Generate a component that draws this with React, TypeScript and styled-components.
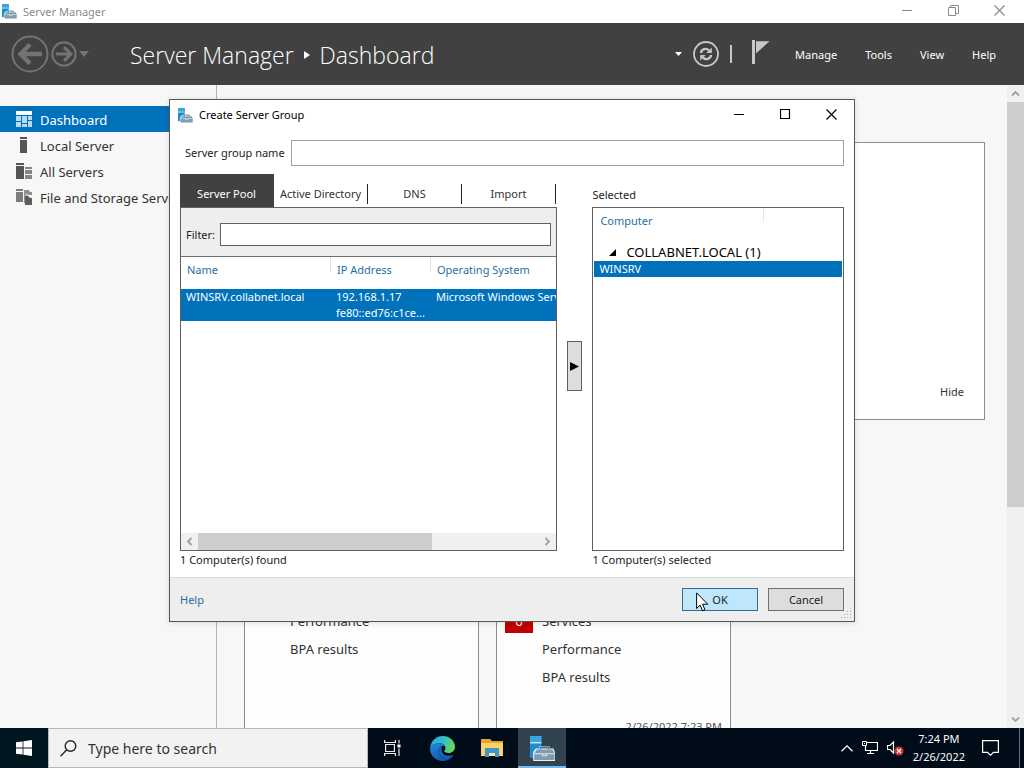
import React from 'react';
import styled, { createGlobalStyle } from 'styled-components';

const blue = '#0072bc';
const linkBlue = '#1f6fa5';
const charcoal = '#414141';

const GlobalStyle = createGlobalStyle`
  *, *::before, *::after { box-sizing: border-box; }
  body {
    margin: 0;
    font-family: 'Noto Sans', 'Open Sans', sans-serif;
    font-size: 11px;
    line-height: 16px;
    color: #222;
  }
  button, input { font: inherit; color: inherit; margin: 0; padding: 0; border: 0; border-radius: 0; }
  button { background: none; }
  svg { display: block; flex: none; }
`;

const Desktop = styled.div`
  position: relative;
  display: flex;
  flex-direction: column;
  height: 100vh;
  overflow: hidden;
  background: #f7f7f7;
`;

/* ---------- main window ---------- */

const TitleBar = styled.div`
  display: flex;
  align-items: center;
  height: 23px;
  flex: none;
  padding: 0 2px;
  background: #fff;
  color: #8a8a8a;
`;

const TitleText = styled.span`
  flex: 1;
  padding-left: 6px;
`;

const CaptionButton = styled.button`
  display: flex;
  align-items: center;
  justify-content: center;
  width: 46px;
  height: 22px;
  padding-bottom: 2px;
  color: ${(p: { $dim?: boolean }) => (p.$dim ? '#8a8a8a' : '#000')};
`;

const Header = styled.header`
  display: flex;
  align-items: center;
  height: 62px;
  flex: none;
  padding: 0 14px 0 11px;
  background: ${charcoal};
  color: #fff;
`;

const NavButton = styled.button`
  display: flex;
  align-items: center;
  justify-content: center;
  margin-right: 2px;
`;

const Crumbs = styled.h1`
  display: flex;
  align-items: center;
  gap: 10px;
  flex: 1;
  margin: 0 0 0 39px;
  padding-top: 2px;
  font-family: 'Open Sans', sans-serif;
  font-size: 23px;
  line-height: 32px;
  font-weight: 300;
  color: #fff;
`;

const HeaderTools = styled.div`
  display: flex;
  align-items: center;
  gap: 11px;
`;

const Divider = styled.span`
  width: 2px;
  height: 18px;
  background: #c8c8c8;
`;

const FlagButton = styled.button`
  padding: 0 0 4px 9px;
`;

const MenuBar = styled.nav`
  display: flex;
  margin-left: 11px;
`;

const MenuButton = styled.button`
  padding: 6px 14px 4px;
  color: #fff;
`;

const Workspace = styled.div`
  display: flex;
  flex: 1;
  min-height: 0;
`;

const Sidebar = styled.nav`
  display: flex;
  flex-direction: column;
  width: 217px;
  flex: none;
  padding-top: 21px;
  border-right: 1px solid #b4b4b4;
`;

const SideLink = styled.a<{ $active?: boolean }>`
  display: flex;
  align-items: center;
  gap: 8px;
  height: 26px;
  padding: 0 6px 0 16px;
  font-size: 13px;
  line-height: 18px;
  white-space: nowrap;
  overflow: hidden;
  text-decoration: none;
  color: ${(p) => (p.$active ? '#fff' : '#333')};
  background: ${(p) => (p.$active ? blue : 'transparent')};
  span { padding-top: 2px; }
`;

const Content = styled.main`
  display: flex;
  flex-direction: column;
  gap: 60px;
  flex: 1;
  min-width: 0;
  padding: 57px 22px 0 27px;
  overflow: hidden;
`;

const Welcome = styled.section`
  display: flex;
  justify-content: flex-end;
  align-items: flex-end;
  flex: none;
  height: 278px;
  padding: 19px 20px;
  border: 1px solid #8c8c8c;
  background: #fff;
`;

const HideButton = styled.button`
  color: #333;
`;

const Cards = styled.div`
  display: flex;
  gap: 17px;
  flex: none;
`;

const Card = styled.section`
  display: flex;
  flex-direction: column;
  width: 235px;
  height: 270px;
  padding: 126px 8px 0;
  border: 1px solid #8c8c8c;
  background: #fdfdfd;
`;

const CardRow = styled.div`
  display: flex;
  align-items: center;
  gap: 9px;
  height: 28px;
  font-size: 13px;
  line-height: 18px;
  color: #333;
`;

const BadgeSlot = styled.span`
  width: 28px;
  flex: none;
`;

const Badge = styled(BadgeSlot)`
  height: 24px;
  line-height: 24px;
  text-align: center;
  color: #fff;
  background: #c00000;
`;

const Stamp = styled.time`
  align-self: flex-end;
  margin-top: 28px;
  color: #555;
`;

const VScroll = styled.div`
  display: flex;
  flex-direction: column;
  align-items: center;
  width: 17px;
  flex: none;
  background: #f0f0f0;
`;

const ScrollArrow = styled.button`
  display: flex;
  align-items: center;
  justify-content: center;
  width: 17px;
  height: 17px;
  color: #a0a0a0;
`;

const VThumb = styled.div`
  width: 100%;
  height: 405px;
  margin-bottom: auto;
  background: #cdcdcd;
`;

/* ---------- dialog ---------- */

const Dialog = styled.div`
  position: absolute;
  top: 99px;
  left: 169px;
  right: 169px;
  display: flex;
  flex-direction: column;
  border: 1px solid #555;
  background: #fff;
  box-shadow: 0 1px 6px rgba(0, 0, 0, 0.12);
`;

const DialogTitle = styled.div`
  display: flex;
  align-items: center;
  height: 30px;
  padding-left: 8px;
  color: #000;
`;

const NameRow = styled.label`
  display: flex;
  align-items: center;
  gap: 6px;
  padding: 10px 10px 8px 15px;
`;

const NameInput = styled.input`
  flex: 1;
  min-width: 0;
  height: 26px;
  padding: 0 4px;
  border: 1px solid #a0a0a0;
  background: #fff;
`;

const Columns = styled.div`
  display: grid;
  grid-template-columns: 3fr 35px 2fr;
  grid-template-rows: 33px 344px 18px;
  padding: 0 10px 8px;
`;

const Tabs = styled.div`
  display: grid;
  grid-template-columns: repeat(4, 94px);
`;

const Tab = styled.button<{ $active?: boolean }>`
  display: flex;
  align-items: center;
  justify-content: space-between;
  padding-top: 6px;
  white-space: nowrap;
  color: ${(p) => (p.$active ? '#fff' : '#333')};
  background: ${(p) => (p.$active ? charcoal : 'transparent')};
  span { flex: 1; }
  &::after {
    content: '';
    width: 1px;
    height: 20px;
    background: ${(p) => (p.$active ? 'transparent' : '#222')};
  }
`;

const SelectedLabel = styled.div`
  padding-top: 13px;
`;

const Pane = styled.div`
  display: flex;
  flex-direction: column;
  min-width: 0;
  border: 1px solid #606060;
  background: #fff;
  overflow: hidden;
`;

const FilterRow = styled.label`
  display: flex;
  align-items: center;
  gap: 5px;
  height: 49px;
  flex: none;
  padding: 5px 5px 0;
  border-bottom: 1px solid #707070;
  background: #eee;
`;

const FilterInput = styled.input`
  flex: 1;
  min-width: 0;
  height: 23px;
  padding: 0 4px;
  border: 1px solid #606060;
  background: #fff;
`;

const TableArea = styled.div`
  flex: 1;
  min-height: 0;
  overflow: hidden;
`;

const Table = styled.table`
  border-collapse: collapse;
  table-layout: fixed;
  width: 602px;
  th {
    height: 32px;
    padding: 0 6px 6px;
    font-weight: 400;
    text-align: left;
    color: ${linkBlue};
    background: linear-gradient(#e0e0e0, #e0e0e0) right top / 1px 15px no-repeat;
  }
  td {
    padding: 0 5px;
    vertical-align: top;
    white-space: nowrap;
    overflow: hidden;
    text-overflow: ellipsis;
    color: #fff;
    background: ${blue};
  }
`;

const Col = styled.col<{ $w: number }>`
  width: ${(p) => p.$w}px;
`;

const HScroll = styled.div`
  display: flex;
  height: 17px;
  flex: none;
  background: #f0f0f0;
`;

const HThumb = styled.div`
  width: 234px;
  margin-right: auto;
  background: #cdcdcd;
`;

const Middle = styled.div`
  display: flex;
  align-items: center;
  justify-content: center;
  padding-bottom: 26px;
`;

const AddButton = styled.button`
  display: flex;
  align-items: center;
  justify-content: center;
  width: 15px;
  height: 50px;
  border: 1px solid #606060;
  background: #ddd;
`;

const SelectedHead = styled.div`
  display: grid;
  grid-template-columns: 171px 1fr;
  height: 35px;
  color: ${linkBlue};
  span {
    height: 14px;
    padding: 5px 7px;
    border-right: 1px solid #e6e6e6;
  }
`;

const Group = styled.div`
  display: flex;
  align-items: center;
  gap: 10px;
  height: 18px;
  padding-left: 16px;
  font-size: 13px;
  line-height: 18px;
  color: #000;
`;

const SelectedItem = styled.div`
  margin: 0 1px;
  padding: 0 5px;
  color: #fff;
  background: ${blue};
`;

const Status = styled.div`
  grid-column: ${(p: { $col: number }) => p.$col};
  padding-top: 1px;
`;

const Footer = styled.footer`
  display: flex;
  align-items: center;
  gap: 10px;
  height: 44px;
  padding: 0 10px;
  border-top: 1px solid #dcdcdc;
  background: #eee;
  a { margin-right: auto; color: ${linkBlue}; text-decoration: none; }
`;

const PushButton = styled.button<{ $hot?: boolean }>`
  width: 76px;
  height: 23px;
  border: 1px solid ${(p) => (p.$hot ? '#3c6c8c' : '#707070')};
  background: ${(p) => (p.$hot ? '#bee6fd' : '#ddd')};
  color: #222;
`;

const Grip = styled.div`
  position: absolute;
  right: 1px;
  bottom: 1px;
`;

const Cursor = styled.div`
  position: absolute;
  right: 145px;
  bottom: 9px;
  pointer-events: none;
`;

/* ---------- taskbar ---------- */

const Taskbar = styled.footer`
  display: flex;
  height: 40px;
  flex: none;
  background: #000c18;
  color: #fff;
`;

const StartButton = styled.button`
  display: flex;
  align-items: center;
  justify-content: center;
  width: 48px;
  background: #011720;
`;

const Search = styled.label`
  display: flex;
  align-items: center;
  gap: 11px;
  width: 320px;
  padding-left: 11px;
  border: 1px solid #b8b8b8;
  background: #f2f2f2;
  color: #333;
`;

const SearchInput = styled.input`
  flex: 1;
  min-width: 0;
  padding-top: 2px;
  background: none;
  font-size: 14px;
  line-height: 20px;
  &::placeholder { color: #333; opacity: 1; }
`;

const TaskButtons = styled.div`
  display: flex;
  gap: 2px;
  flex: 1;
`;

const TaskButton = styled.button<{ $active?: boolean }>`
  display: flex;
  align-items: center;
  justify-content: center;
  width: 48px;
  background: ${(p) => (p.$active ? '#33424f' : 'transparent')};
  box-shadow: ${(p) => (p.$active ? 'inset 0 -2px #76b9ed' : 'none')};
`;

const Tray = styled.div`
  display: flex;
  align-items: center;
  gap: 9px;
`;

const Clock = styled.time`
  display: flex;
  flex-direction: column;
  align-items: center;
  padding: 0 8px 0 0;
  line-height: 18px;
  color: #fff;
`;

const ShowDesktop = styled.button`
  align-self: stretch;
  width: 5px;
  margin-left: 11px;
  border-left: 1px solid #6a727a;
`;

/* ---------- drawings ---------- */

const ServerIcon = ({ size }: { size: number }) => (
  <svg width={size} height={size} viewBox="0 0 24 24" aria-hidden="true">
    <path d="M0 0h11v21H0z" fill="#1c8fd0" />
    <path d="M0 0h11v6H0z" fill="#3fa4da" />
    <path d="M0 6.500h11" stroke="#e6f4fb" strokeWidth="1.200" />
    <path d="M3 15.500L5.500 12H9v-2h10v2h3.500l1.500 3.500V24H3z" fill="#fff" opacity=".9" />
    <path d="M10 13v-1.800h8V13" fill="none" stroke="#54748a" strokeWidth="1.400" />
    <path d="M4 16.500L6.500 13h15l2 3.500V23H4z" fill="#7d9cb0" />
    <path d="M4 17h19.500M12 16.500v2.500h4v-2.500" fill="none" stroke="#dde9f0" />
  </svg>
);

const MinimizeIcon = () => (
  <svg width="11" height="11" viewBox="0 0 11 11"><path d="M0 5.500h10" stroke="currentColor" /></svg>
);
const RestoreIcon = () => (
  <svg width="11" height="11" viewBox="0 0 11 11" fill="none" stroke="currentColor">
    <path d="M.5 2.500h7v8h-7zM2.500 2.500v-2h8v8h-3" />
  </svg>
);
const MaximizeIcon = () => (
  <svg width="11" height="11" viewBox="0 0 11 11"><path d="M.5.5h9v9h-9z" fill="none" stroke="currentColor" strokeWidth="1.200" /></svg>
);
const CloseIcon = () => (
  <svg width="11" height="11" viewBox="0 0 11 11"><path d="M.5.5l10 10M10.500.5l-10 10" stroke="currentColor" strokeWidth="1.200" /></svg>
);

const NavArrow = ({ size, back }: { size: number; back?: boolean }) => (
  <svg width={size} height={size} viewBox="0 0 38 38" fill="none" stroke="#737373">
    <circle cx="19" cy="19" r={back ? 17.500 : 17} strokeWidth={back ? 2 : 3} />
    {back ? (
      <path d="M31 19H9M19 9.500L9.500 19l9.500 9.500" strokeWidth="4.500" />
    ) : (
      <path d="M7 19h22M19 9l10 10-10 10" strokeWidth="4.500" />
    )}
  </svg>
);

const DownTriangle = ({ w, h, color }: { w: number; h: number; color: string }) => (
  <svg width={w} height={h} viewBox="0 0 10 6" preserveAspectRatio="none"><path d="M0 0h10L5 6z" fill={color} /></svg>
);

const RefreshIcon = () => (
  <svg width="26" height="26" viewBox="0 0 26 26" fill="none" stroke="#c8c8c8">
    <circle cx="13" cy="13" r="12" strokeWidth="1.800" />
    <path d="M8 12c.3-3.800 5-5.500 8-2.600M18 14c-.3 3.800-5 5.500-8 2.600" strokeWidth="2.400" />
    <path d="M18.800 6.500v5.500h-5.500zM7.200 19.500V14h5.500z" fill="#c8c8c8" stroke="none" />
  </svg>
);

const FlagIcon = () => (
  <svg width="18" height="24" viewBox="0 0 18 24">
    <path d="M0 0h3v24H0z" fill="#c8c8c8" />
    <path d="M4 1.200h13.500L4 13.500z" fill="#c8c8c8" />
  </svg>
);

const DashboardIcon = () => (
  <svg width="16" height="16" viewBox="0 0 16 16">
    <path d="M0 0h16v4H0z" fill="#fff" />
    <path d="M0 5h5v5H0zM0 11h5v5H0zM6 5h5v7H6zM12 5h4v4h-4zM6 13h5v3H6zM12 10h4v6h-4z" fill="#b9d9ee" />
  </svg>
);
const LocalIcon = () => (
  <svg width="16" height="16" viewBox="0 0 16 16"><path d="M4 0h7v2H4zM4 3h7v13H4z" fill="#555" /></svg>
);
const AllIcon = () => (
  <svg width="16" height="16" viewBox="0 0 16 16">
    <path d="M0 0h8v2H0zM0 3h8v13H0z" fill="#555" />
    <path d="M9 4h7v2H9zM9 7h7v4H9zM9 12h7v4H9z" fill="#858585" />
  </svg>
);
const StorageIcon = () => (
  <svg width="16" height="16" viewBox="0 0 16 16">
    <path d="M0 0h7v2H0zM0 3h7v10H0z" fill="#7c7c7c" />
    <path d="M8 1h5l1 2h2v3H8zM8 5h4v9H8z" fill="#909090" />
    <path d="M9 7h3l2 2h2v7H9z" fill="#5c5c5c" />
    <path d="M9 6h3.500l2 2.500" stroke="#eee" fill="none" />
  </svg>
);

const Chevron = ({ d }: { d: string }) => (
  <svg width="9" height="9" viewBox="0 0 9 9" fill="none"><path d={d} stroke="currentColor" strokeWidth="1.800" /></svg>
);

const GripDots = () => (
  <svg width="12" height="12" viewBox="0 0 12 12" fill="#aaa">
    <path d="M9 0h1v1H9zM6 3h1v1H6zM9 3h1v1H9zM3 6h1v1H3zM6 6h1v1H6zM9 6h1v1H9zM0 9h1v1H0zM3 9h1v1H3zM6 9h1v1H6zM9 9h1v1H9z" />
  </svg>
);

const CursorArrow = () => (
  <svg width="13" height="20" viewBox="0 0 13 20">
    <path d="M.6.9v15.600l3.500-3.400 2.500 5.700 2.400-1-2.500-5.600h5.200z" fill="#fff" stroke="#000" />
  </svg>
);

const WindowsLogo = () => (
  <svg width="16" height="16" viewBox="0 0 16 16" fill="#fff">
    <path d="M0 2.300L6.600 1.400v6.200H0zM7.400 1.300L16 0v7.600H7.400zM0 8.400h6.600v6.200L0 13.700zM7.400 8.400H16V16l-8.600-1.300z" />
  </svg>
);

const SearchIcon = () => (
  <svg width="17" height="17" viewBox="0 0 17 17" fill="none" stroke="#222" strokeWidth="1.400">
    <circle cx="10.500" cy="6" r="5.300" />
    <path d="M6.800 9.800L.5 16.200" />
  </svg>
);

const TaskViewIcon = () => (
  <svg width="17" height="16" viewBox="0 0 17 16" fill="none" stroke="#e8e8e8" strokeWidth="1.200">
    <path d="M1.600 4.500h8.800v7H1.600zM.6 0v2.500h10.800V0M.6 16v-2.500h10.800V16M15 0v3.500M15 8.500V16" />
    <path d="M13.500 4.500h3v3h-3z" fill="#fff" stroke="none" />
  </svg>
);

const EdgeIcon = () => (
  <svg width="25" height="25" viewBox="0 0 24 24">
    <defs>
      <linearGradient id="edgeTop" x1="0" y1="0.300" x2="1" y2="0.600">
        <stop offset="0" stopColor="#2aa7e0" />
        <stop offset=".5" stopColor="#2fc3c4" />
        <stop offset="1" stopColor="#6fd854" />
      </linearGradient>
      <linearGradient id="edgeLow" x1="0" y1="0" x2="0.600" y2="1">
        <stop offset="0" stopColor="#1f8fe0" />
        <stop offset="1" stopColor="#0f56a8" />
      </linearGradient>
    </defs>
    <path d="M.2 11C1 4.500 6 0 12.200 0 19 0 24 4.800 24 10.300c0 3.700-2.900 6-6.100 6-2.700 0-4.200-.9-4.200-1.800 0-.7 1.100-1.100 1.100-3C14.800 9 12.300 7 8.900 7 5.300 7 1.700 8.600.2 11z" fill="url(#edgeTop)" />
    <path d="M.2 11C1.700 8.600 5.300 7 8.900 7c3.400 0 5.500 1.700 5.900 3.600-.8-.9-2.300-1.200-3.500-.7-4.800 2-4 9.600 2.800 11 3.200.6 5.800-.2 7.800-1.500C19.700 22.300 16 24 12.200 24 5 24-.7 18 .2 11z" fill="url(#edgeLow)" />
    <path d="M11.300 9.900c-4.800 2-4 9.600 2.800 11 3.200.6 5.800-.2 7.800-1.500.6-.5.200-1.200-.6-.9-4.600 1.600-9.300-.3-10-4.200-.3-1.900.2-3.500 0-4.400z" fill="#1667bd" />
  </svg>
);

const ExplorerIcon = () => (
  <svg width="22" height="18" viewBox="0 0 22 18">
    <path d="M0 0h9l2 2h11v3H0z" fill="#e3a52c" />
    <path d="M0 4h22v13H0z" fill="#fbd468" />
    <path d="M4 9h14v9h-4v-4H8v4H4z" fill="#4095c9" />
    <path d="M8 14h6v3H8z" fill="#fbe3a0" />
  </svg>
);

const ChevronUpIcon = () => (
  <svg width="12" height="7" viewBox="0 0 12 7" fill="none" stroke="#fff" strokeWidth="1.300"><path d="M.5 6.300L6 .9l5.500 5.400" /></svg>
);
const NetworkIcon = () => (
  <svg width="16" height="14" viewBox="0 0 16 14" fill="none" stroke="#fff">
    <path d="M5 1.500h10.500v8H3.500V5M8.500 9.500v3M5 12.500h7" strokeWidth="1.200" />
    <path d="M.5.500h4v4h-4z" fill="#000c18" />
    <path d="M2 2h1v1H2z" fill="#fff" stroke="none" />
  </svg>
);
const VolumeIcon = () => (
  <svg width="17" height="15" viewBox="0 0 17 15">
    <path d="M.5 4.500h2.500L6.500 1v11L3 8.500H.5z" fill="none" stroke="#fff" strokeWidth="1.200" />
    <circle cx="12" cy="10" r="4.500" fill="#d03438" />
    <path d="M10 8l4 4M14 8l-4 4" stroke="#fff" strokeWidth="1.200" />
  </svg>
);
const NoticeIcon = () => (
  <svg width="17" height="16" viewBox="0 0 17 16" fill="none" stroke="#fff" strokeWidth="1.200">
    <path d="M.6.6h15.800v11.800H11.500L8.500 15.200l-3-2.800H.6z" />
  </svg>
);

/* ---------- page ---------- */

const sideItems = [
  { label: 'Dashboard', icon: <DashboardIcon />, active: true },
  { label: 'Local Server', icon: <LocalIcon /> },
  { label: 'All Servers', icon: <AllIcon /> },
  { label: 'File and Storage Services', icon: <StorageIcon /> },
];

const CreateGroupDialog = () => (
  <Dialog role="dialog" aria-label="Create Server Group">
    <DialogTitle>
      <ServerIcon size={15} />
      <TitleText>Create Server Group</TitleText>
      <CaptionButton aria-label="Minimize"><MinimizeIcon /></CaptionButton>
      <CaptionButton aria-label="Maximize"><MaximizeIcon /></CaptionButton>
      <CaptionButton aria-label="Close"><CloseIcon /></CaptionButton>
    </DialogTitle>
    <NameRow>
      Server group name
      <NameInput type="text" />
    </NameRow>
    <Columns>
      <Tabs>
        <Tab $active><span>Server Pool</span></Tab>
        <Tab><span>Active Directory</span></Tab>
        <Tab><span>DNS</span></Tab>
        <Tab><span>Import</span></Tab>
      </Tabs>
      <span />
      <SelectedLabel>Selected</SelectedLabel>

      <Pane>
        <FilterRow>
          Filter:
          <FilterInput type="text" />
        </FilterRow>
        <TableArea>
          <Table>
            <colgroup>
              <Col $w={150} />
              <Col $w={100} />
              <Col $w={352} />
            </colgroup>
            <thead>
              <tr><th>Name</th><th>IP Address</th><th>Operating System</th></tr>
            </thead>
            <tbody>
              <tr>
                <td>WINSRV.collabnet.local</td>
                <td>192.168.1.17<br />fe80::ed76:c1ce...</td>
                <td>Microsoft Windows Server</td>
              </tr>
            </tbody>
          </Table>
        </TableArea>
        <HScroll>
          <ScrollArrow aria-label="Scroll left"><Chevron d="M6.500 1L3 4.500 6.500 8" /></ScrollArrow>
          <HThumb />
          <ScrollArrow aria-label="Scroll right"><Chevron d="M2.500 1L6 4.500 2.500 8" /></ScrollArrow>
        </HScroll>
      </Pane>
      <Middle>
        <AddButton aria-label="Add">
          <svg width="9" height="9" viewBox="0 0 9 9"><path d="M0 0l9 4.500L0 9z" /></svg>
        </AddButton>
      </Middle>
      <Pane>
        <SelectedHead><span>Computer</span></SelectedHead>
        <Group>
          <svg width="7" height="7" viewBox="0 0 7 7"><path d="M7 0v7H0z" /></svg>
          COLLABNET.LOCAL (1)
        </Group>
        <SelectedItem>WINSRV</SelectedItem>
      </Pane>

      <Status $col={1}>1 Computer(s) found</Status>
      <Status $col={3}>1 Computer(s) selected</Status>
    </Columns>
    <Footer>
      <a href="#help">Help</a>
      <PushButton $hot>OK</PushButton>
      <PushButton>Cancel</PushButton>
    </Footer>
    <Grip><GripDots /></Grip>
    <Cursor><CursorArrow /></Cursor>
  </Dialog>
);

export default function App() {
  return (
    <Desktop>
      <GlobalStyle />
      <TitleBar>
        <ServerIcon size={15} />
        <TitleText>Server Manager</TitleText>
        <CaptionButton $dim aria-label="Minimize"><MinimizeIcon /></CaptionButton>
        <CaptionButton $dim aria-label="Restore"><RestoreIcon /></CaptionButton>
        <CaptionButton $dim aria-label="Close"><CloseIcon /></CaptionButton>
      </TitleBar>
      <Header>
        <NavButton aria-label="Back"><NavArrow size={38} back /></NavButton>
        <NavButton aria-label="Forward"><NavArrow size={26} /></NavButton>
        <NavButton aria-label="History"><DownTriangle w={10} h={6} color="#737373" /></NavButton>
        <Crumbs>
          Server Manager
          <svg width="6" height="8" viewBox="0 0 6 8"><path d="M0 0l6 4-6 4z" fill="#fff" /></svg>
          Dashboard
        </Crumbs>
        <HeaderTools>
          <DownTriangle w={7} h={4} color="#fff" />
          <RefreshIcon />
          <Divider />
          <FlagButton aria-label="Notifications"><FlagIcon /></FlagButton>
        </HeaderTools>
        <MenuBar>
          <MenuButton>Manage</MenuButton>
          <MenuButton>Tools</MenuButton>
          <MenuButton>View</MenuButton>
          <MenuButton>Help</MenuButton>
        </MenuBar>
      </Header>
      <Workspace>
        <Sidebar>
          {sideItems.map((item) => (
            <SideLink key={item.label} href="#" $active={item.active}>
              {item.icon}
              <span>{item.label}</span>
            </SideLink>
          ))}
        </Sidebar>
        <Content>
          <Welcome><HideButton>Hide</HideButton></Welcome>
          <Cards>
            <Card>
              <CardRow><BadgeSlot />Performance</CardRow>
              <CardRow><BadgeSlot />BPA results</CardRow>
            </Card>
            <Card>
              <CardRow><Badge>6</Badge>Services</CardRow>
              <CardRow><BadgeSlot />Performance</CardRow>
              <CardRow><BadgeSlot />BPA results</CardRow>
              <Stamp>2/26/2022 7:23 PM</Stamp>
            </Card>
          </Cards>
        </Content>
        <VScroll>
          <ScrollArrow aria-label="Scroll up"><Chevron d="M1 6.500L4.500 3 8 6.500" /></ScrollArrow>
          <VThumb />
          <ScrollArrow aria-label="Scroll down"><Chevron d="M1 2.500L4.500 6 8 2.500" /></ScrollArrow>
        </VScroll>
      </Workspace>
      <CreateGroupDialog />
      <Taskbar>
        <StartButton aria-label="Start"><WindowsLogo /></StartButton>
        <Search aria-label="Search">
          <SearchIcon />
          <SearchInput type="text" placeholder="Type here to search" />
        </Search>
        <TaskButtons>
          <TaskButton aria-label="Task view"><TaskViewIcon /></TaskButton>
          <TaskButton aria-label="Edge"><EdgeIcon /></TaskButton>
          <TaskButton aria-label="File Explorer"><ExplorerIcon /></TaskButton>
          <TaskButton $active aria-label="Server Manager"><ServerIcon size={25} /></TaskButton>
        </TaskButtons>
        <Tray>
          <ChevronUpIcon />
          <NetworkIcon />
          <VolumeIcon />
          <Clock><span>7:24 PM</span><span>2/26/2022</span></Clock>
          <NoticeIcon />
          <ShowDesktop aria-label="Show desktop" />
        </Tray>
      </Taskbar>
    </Desktop>
  );
}
